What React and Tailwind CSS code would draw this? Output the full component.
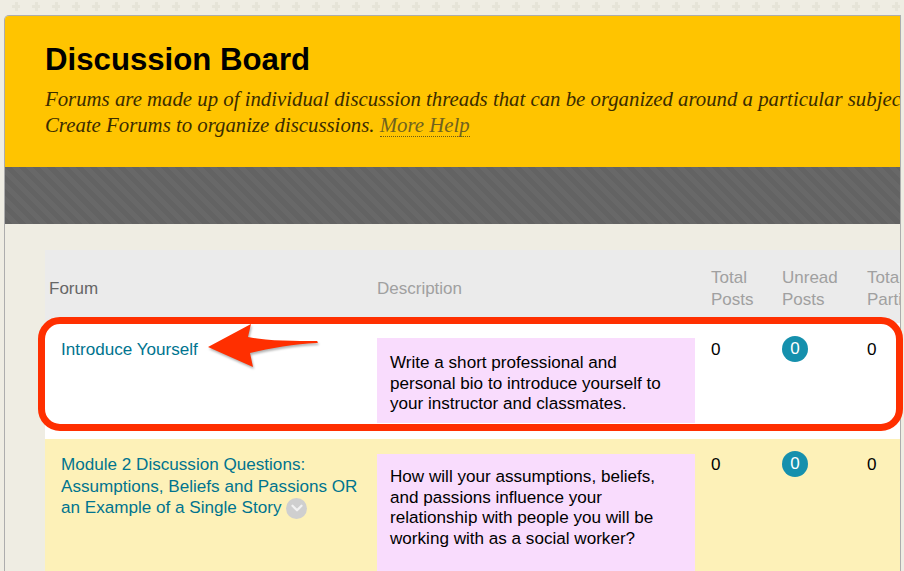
import { ChevronDown } from "lucide-react";

const rowText = "font-['Liberation_Sans',Arial,sans-serif] text-[17.1px] text-black";
const linkText = "text-[17.1px] leading-[21.5px] text-[#00748f]";

const Badge = () => (
  <span className="flex h-[26px] w-[26px] items-center justify-center rounded-full bg-[#1590ad] text-[17px] text-white">
    0
  </span>
);

const Row = ({ bg, pt, linkPt, pinkPt, pinkH, children, text }) => (
  <div className={`flex ${bg} ${rowText}`}>
    <div className={`w-[332px] shrink-0 pl-4 ${linkPt}`}>{children}</div>
    <div className="w-[318px] shrink-0 pt-[15px]">
      <div className={`bg-[#f9dcfd] px-[13px] leading-[20.5px] ${pinkPt} ${pinkH}`}>{text}</div>
    </div>
    <div className={`w-[87px] shrink-0 pl-4 ${pt}`}>0</div>
    <div className={`w-[85px] shrink-0 ${pt}`}>
      <div className="-mt-[1px]"><Badge /></div>
    </div>
    <div className={`shrink-0 ${pt}`}>0</div>
  </div>
);

export default function App() {
  return (
    <div className="relative h-[571px] w-[904px] overflow-hidden bg-[#efede3] font-['Liberation_Sans',Arial,sans-serif]">
      <div className="h-[15px] bg-[#efede3] bg-[linear-gradient(90deg,transparent_12px,#e6e4d8_12px,#e6e4d8_21px,transparent_21px),linear-gradient(90deg,transparent_15px,#e6e4d8_15px,#e6e4d8_18px,transparent_18px)] bg-[size:20px_3px,20px_9px] bg-[position:0px_5px,0px_2px] bg-repeat-x" />

      <div className="ml-[4px] mr-[3px] overflow-hidden rounded-tl-[5px] border-x border-t border-[#adadad] bg-[#efede3]">
        <div className="h-[151px] overflow-hidden bg-[#ffc400] pl-[40px] pt-[25px]">
          <h1 className="text-[31.2px] font-bold leading-[38px] text-black">Discussion Board</h1>
          <p className="mt-[7px] whitespace-nowrap font-['Liberation_Serif',Georgia,serif] text-[20.8px] italic leading-[26px] text-[#3b2c00]">
            Forums are made up of individual discussion threads that can be organized around a particular subject.
            <br />
            Create Forums to organize discussions.{" "}
            <span className="border-b border-dotted border-[#6b5a1a] text-[#70621f]">More Help</span>
          </p>
        </div>

        <div className="h-[57px] bg-[#666666] bg-[repeating-linear-gradient(45deg,#636363_0px,#636363_5px,#686868_5px,#686868_10px)]" />

        <div className="h-[360px] overflow-hidden pl-[40px] pt-[26px]">
          <div className="flex h-[73px] items-center bg-[#ebebeb] pt-[5px] text-[17px] leading-[22px] text-[#a0a0a0]">
            <div className="w-[332px] shrink-0 pl-[4px] text-[#666666]">Forum</div>
            <div className="w-[334px] shrink-0">Description</div>
            <div className="w-[71px] shrink-0">Total<br />Posts</div>
            <div className="w-[85px] shrink-0">Unread<br />Posts</div>
            <div className="shrink-0 whitespace-nowrap">Total<br />Participants</div>
          </div>

          <div className="h-[116px] bg-white">
            <Row
              bg="bg-white"
              pt="pt-[14px]"
              linkPt="pt-[14px]"
              pinkPt="pt-[15px]"
              pinkH="h-[85px]"
              text="Write a short professional and personal bio to introduce yourself to your instructor and classmates."
            >
              <span className={linkText}>Introduce Yourself</span>
            </Row>
          </div>

          <Row
            bg="bg-[#fdf1b8]"
            pt="pt-[13px]"
            linkPt="pt-[15px]"
            pinkPt="pt-[13px]"
            pinkH="h-[120px]"
            text="How will your assumptions, beliefs, and passions influence your relationship with people you will be working with as a social worker?"
          >
            <div className={`${linkText} w-[310px]`}>
              Module 2 Discussion Questions: Assumptions, Beliefs and Passions OR an Example of a Single Story{" "}
              <span className="inline-flex h-[21px] w-[21px] items-center justify-center rounded-full bg-[#cfcfcf] align-[-4px]">
                <ChevronDown size={18} strokeWidth={3} color="#f2f2f2" />
              </span>
            </div>
          </Row>
        </div>
      </div>

      {/* red annotation over the first row */}
      <div className="absolute left-[38px] top-[317px] h-[114px] w-[865px] rounded-[22px] border-[7px] border-[#ff2f00]" />
      <svg className="absolute left-[200px] top-[318px]" width="130" height="60" viewBox="0 0 130 60">
        <path
          d="M8 29 L51 6 C50 10 49 15 48 19 C70 23 95 23 117 23 C118 24 118 25 117 25 C95 26 70 30 50 35 C51 40 52 44 53 49 Z"
          fill="#ff2f00"
          style={{ filter: "drop-shadow(1px 2px 1px rgba(0,0,0,0.3))" }}
        />
      </svg>
    </div>
  );
}
